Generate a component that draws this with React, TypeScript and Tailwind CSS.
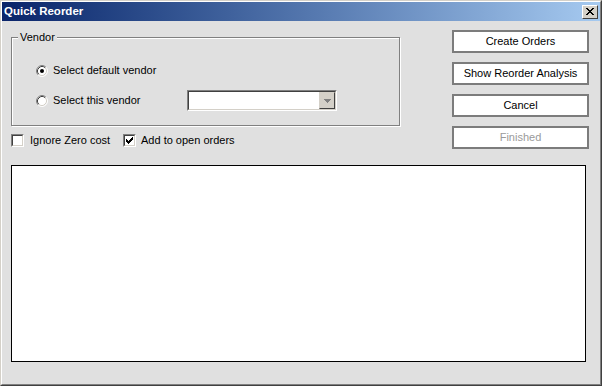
import React from 'react';

const font = "font-['Liberation_Sans',Arial,sans-serif]";

function Radio({ checked }: { checked?: boolean }) {
  return (
    <svg width="12" height="12" viewBox="0 0 12 12" className="shrink-0">
      <circle cx="6" cy="6" r="5" fill="#fff" />
      <path d="M9.89 2.11 A5.5 5.5 0 0 0 2.11 9.89" fill="none" stroke="#808080" />
      <path d="M2.11 9.89 A5.5 5.5 0 0 0 9.89 2.11" fill="none" stroke="#fff" />
      <path d="M9.18 2.82 A4.5 4.5 0 0 0 2.82 9.18" fill="none" stroke="#404040" />
      <path d="M2.82 9.18 A4.5 4.5 0 0 0 9.18 2.82" fill="none" stroke="#d4d0c8" />
      {checked && <circle cx="6" cy="6" r="2" fill="#000" />}
    </svg>
  );
}

function Check({ checked }: { checked?: boolean }) {
  return (
    <div className="w-[13px] h-[13px] shrink-0 border border-t-[#808080] border-l-[#808080] border-r-white border-b-white">
      <div className="w-full h-full bg-white border border-t-[#404040] border-l-[#404040] border-r-[#d4d0c8] border-b-[#d4d0c8]">
        {checked && (
          <svg width="9" height="9" viewBox="0 0 9 9" shapeRendering="crispEdges">
            <path d="M1 3h1v3h-1zM2 4h1v3h-1zM3 5h1v3h-1zM4 4h1v3h-1zM5 3h1v3h-1zM6 2h1v3h-1zM7 1h1v3h-1z" fill="#000" />
          </svg>
        )}
      </div>
    </div>
  );
}

function Button({ label, disabled }: { label: string; disabled?: boolean }) {
  return (
    <button
      className={`w-[137px] h-[23px] bg-white border-2 border-[#7c7c7c] text-[11px] leading-none ${
        disabled ? 'text-[#9a9a9a]' : 'text-black'
      }`}
    >
      {label}
    </button>
  );
}

export default function App() {
  return (
    <div className={`w-[602px] h-[386px] border border-t-[#d4d0c8] border-l-[#d4d0c8] border-r-[#404040] border-b-[#404040] ${font}`}>
      <div className="w-full h-full flex flex-col bg-[#e0e0e0] border border-t-white border-l-white border-r-[#808080] border-b-[#808080]">
        {/* title bar */}
        <div className="h-[19px] flex items-center justify-between bg-gradient-to-r from-[#0a246a] to-[#a6caf0] pl-[2px] pr-[2px]">
          <span className="text-white font-bold text-[11.5px] leading-none">Quick Reorder</span>
          <div className="w-[16px] h-[14px] bg-[#d4d0c8] border border-t-white border-l-white border-r-[#404040] border-b-[#404040] flex items-center justify-center">
            <svg width="8" height="7" viewBox="0 0 8 7" shapeRendering="crispEdges">
              <path d="M0 0h2v1h-2zM6 0h2v1h-2zM1 1h2v1h-2zM5 1h2v1h-2zM2 2h4v1h-4zM3 3h2v1h-2zM2 4h4v1h-4zM1 5h2v1h-2zM5 5h2v1h-2zM0 6h2v1h-2zM6 6h2v1h-2z" fill="#000" />
            </svg>
          </div>
        </div>

        <div className="flex-1 px-[9px] text-[11px] text-black">
          <div className="flex items-start">
            <div className="w-[389px] pt-[16px]">
              {/* Vendor group */}
              <div className="relative h-[89px] border border-[#808080] shadow-[inset_1px_1px_0_#fff,1px_1px_0_#fff] pl-[24px] pt-[26px]">
                <span className="absolute -top-[7px] left-[6px] px-[2px] bg-[#e0e0e0] leading-[13px]">Vendor</span>
                <div className="flex items-center gap-[5px] h-[13px]">
                  <Radio checked />
                  <span>Select default vendor</span>
                </div>
                <div className="flex items-center h-[21px] mt-[13px]">
                  <div className="flex items-center gap-[5px] w-[151px]">
                    <Radio />
                    <span>Select this vendor</span>
                  </div>
                  <div className="w-[150px] h-[21px] border border-t-[#808080] border-l-[#808080] border-r-white border-b-white">
                    <div className="w-full h-full flex justify-end bg-white border border-t-[#404040] border-l-[#404040] border-r-[#d4d0c8] border-b-[#d4d0c8]">
                      <div className="w-[16px] h-full bg-[#d4d0c8] border border-t-[#d4d0c8] border-l-[#d4d0c8] border-r-[#404040] border-b-[#404040] flex items-center justify-center">
                        <svg width="7" height="4" viewBox="0 0 7 4" shapeRendering="crispEdges">
                          <path d="M0 0h7v1h-7zM1 1h5v1h-5zM2 2h3v1h-3zM3 3h1v1h-1z" fill="#808080" />
                        </svg>
                      </div>
                    </div>
                  </div>
                </div>
              </div>

              <div className="flex items-center h-[13px] mt-[8px]">
                <div className="flex items-center gap-[6px] w-[112px]">
                  <Check />
                  <span>Ignore Zero cost</span>
                </div>
                <div className="flex items-center gap-[5px]">
                  <Check checked />
                  <span>Add to open orders</span>
                </div>
              </div>
            </div>

            <div className="ml-[52px] pt-[9px] flex flex-col gap-[9px]">
              <Button label="Create Orders" />
              <Button label="Show Reorder Analysis" />
              <Button label="Cancel" />
              <Button label="Finished" disabled />
            </div>
          </div>

          <div className="mt-[16px] w-[575px] h-[197px] bg-white border border-black" />
        </div>
      </div>
    </div>
  );
}
